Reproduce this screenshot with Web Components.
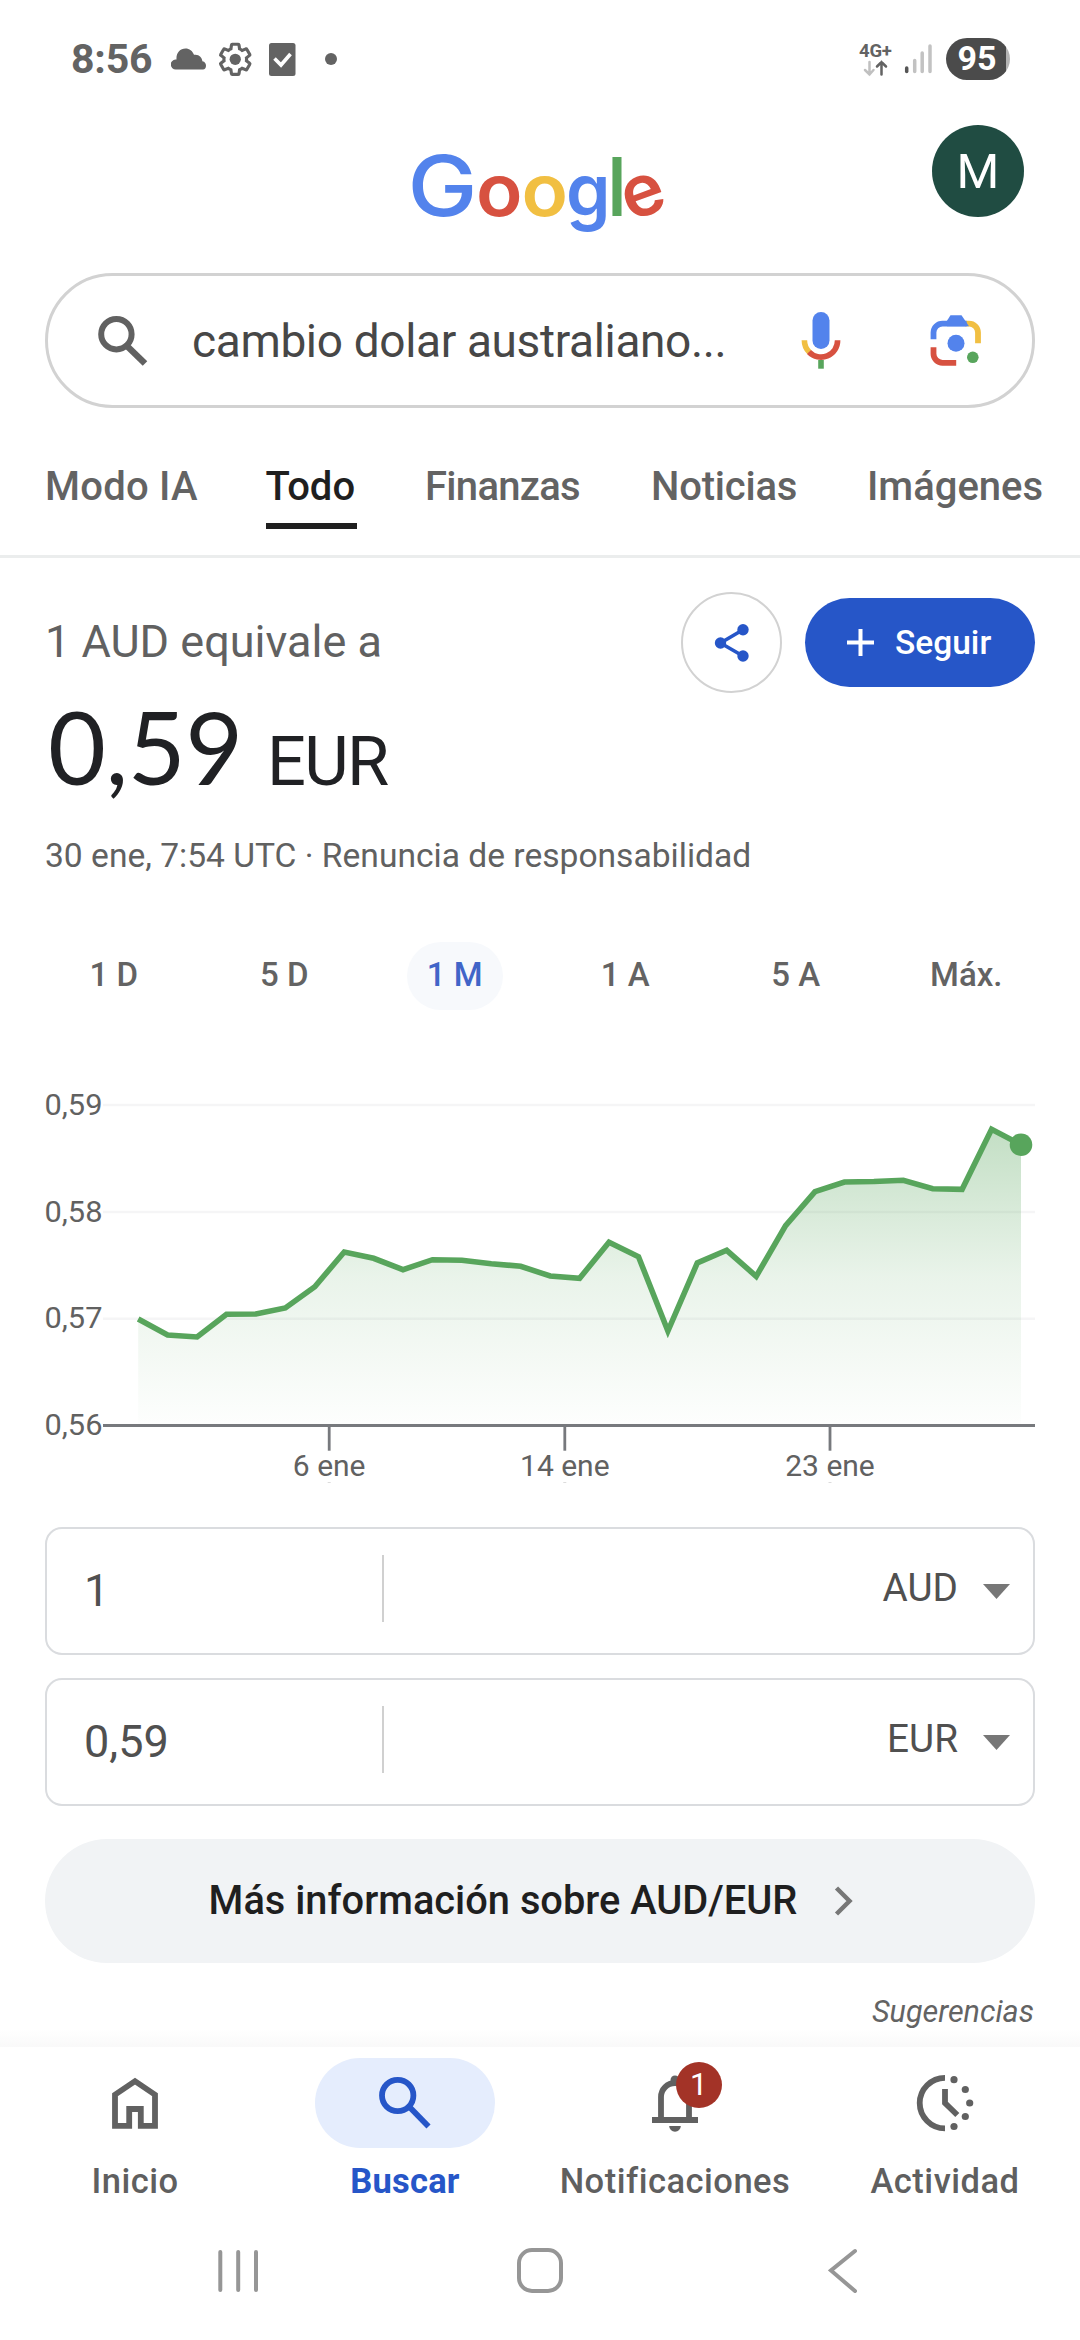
<!DOCTYPE html>
<html lang="es">
<head>
<meta charset="utf-8">
<title>cambio dolar australiano</title>
<style>
  body {
    margin: 0;
    width: 1080px;
    height: 2340px;
    overflow: hidden;
    background: #fff;
    color: #5f6062;
    font-family: Roboto, "Liberation Sans", sans-serif;
  }
</style>
</head>
<body>
<search-page></search-page>

<script>
/**
 * Base element: renders the markup returned by render() in an open shadow root.
 */
class UiElement extends HTMLElement {
  constructor() {
    super();
    this._shadowRoot = this.attachShadow({ mode: 'open' });
  }

  connectedCallback() {
    this._shadowRoot.innerHTML = `
    <style>
      :host { display: block; box-sizing: border-box; }
      * { box-sizing: border-box; }
      svg { display: block; flex: none; }
    </style>
    ${this.render()}`;
  }
}

// Clock, notification icons, signal and battery
class StatusBar extends UiElement {
  render() {
    return `
    <style>
      :host {
        display: flex;
        align-items: center;
        height: 118px;
        padding: 0 70px;
        color: #636363;
      }
      .time { width: 101px; padding-left: 1px; font-weight: 700; font-size: 41px; letter-spacing: -.2px; line-height: 118px; }
      .left { flex: 1; }
      .net { width: 35px; font-weight: 700; font-size: 18.5px; line-height: 18px; letter-spacing: -.2px; }
      .net svg { margin-left: 4px; }
      .battery {
        width: 64px;
        height: 42px;
        margin-left: 12px;
        border-radius: 21px;
        background: linear-gradient(90deg, #4b4b4b 60px, #b4b4b4 60px);
        color: #fff;
        font-weight: 700;
        font-size: 34px;
        line-height: 41px;
        text-align: center;
        padding-right: 2px;
      }
    </style>
    <div class="time">8:56</div>
    <svg class="left" width="400" height="40" viewBox="171 39 400 40" preserveAspectRatio="xMinYMid">
      <path fill="#636363" d="M176 69.500a5 5 0 0 1-.5-10c.3 0 .8 0 1-.1C176 53 180 48.500 185.500 48.500c4 0 7 2.400 8.500 6.300 5-.8 8 2.500 8.400 6.500 2.600.4 3.600 2.500 3.600 4.500 0 2.200-1.200 3.700-3 3.700z"/>
      <g transform="translate(216.400 40.500) scale(1.570)">
        <path fill="none" stroke="#636363" stroke-width="2" d="M19.140,12.940c0.040-0.300,0.060-0.610,0.060-0.940c0-0.320-0.020-0.640-0.070-0.940l2.030-1.580c0.180-0.140,0.230-0.410,0.120-0.610 l-1.920-3.320c-0.120-0.220-0.370-0.290-0.590-0.220l-2.390,0.960c-0.500-0.380-1.030-0.700-1.620-0.940L14.400,2.810c-0.040-0.240-0.240-0.410-0.480-0.410 h-3.840c-0.240,0-0.430,0.170-0.470,0.410L9.250,5.350C8.660,5.590,8.120,5.920,7.630,6.290L5.240,5.330c-0.220-0.080-0.470,0-0.590,0.220L2.740,8.870 C2.620,9.080,2.660,9.340,2.860,9.480l2.030,1.580C4.840,11.360,4.800,11.690,4.800,12s0.020,0.640,0.070,0.940l-2.030,1.580 c-0.180,0.140-0.230,0.410-0.120,0.610l1.920,3.320c0.120,0.220,0.370,0.290,0.590,0.220l2.390-0.960c0.500,0.380,1.030,0.700,1.620,0.940l0.360,2.540 c0.050,0.240,0.240,0.410,0.480,0.410h3.840c0.240,0,0.440-0.170,0.470-0.410l0.360-2.540c0.590-0.240,1.130-0.560,1.620-0.940l2.390,0.960 c0.220,0.080,0.470,0,0.590-0.220l1.920-3.320c0.120-0.220,0.070-0.470-0.120-0.610L19.140,12.940z"/>
        <circle cx="12" cy="12" r="3.600" fill="#636363"/>
      </g>
      <rect x="269" y="43" width="26.500" height="33" rx="2.500" fill="#636363"/>
      <path fill="none" stroke="#fff" stroke-width="3.600" d="M274.500 58.500l6.500 6.500 9.500-11"/>
      <circle cx="331" cy="59" r="6" fill="#636363"/>
    </svg>
    <div class="net">4G+
      <svg width="28" height="17" viewBox="0 0 28 17" fill="none" stroke-width="2.500" stroke-linecap="round">
        <path stroke="#c0c0c0" d="M6.500 2v12.500M2 10l4.500 4.500L10.500 10"/>
        <path stroke="#636363" d="M18.500 14.500V2M14 6.500L18.500 2l4.500 4.500"/>
      </svg>
    </div>
    <svg width="30" height="30" viewBox="904 44 30 30" style="margin-left: 10px" stroke-width="3.500" stroke-linecap="round">
      <path stroke="#555" d="M906.700 68v3.500"/>
      <path stroke="#c2c2c2" d="M914.700 60.500v11M922.200 53v18.500M930 46v25.500"/>
    </svg>
    <div class="battery">95</div>`;
  }
}

// Logo and account avatar
class AppHeader extends UiElement {
  render() {
    return `
    <style>
      :host {
        display: grid;
        grid-template-columns: 1fr 260px 1fr;
        height: 155px;
        padding: 0 56px 0 45px;
      }
      .logo { grid-column: 2; }
      .logo text { font-family: Inter, Roboto, sans-serif; font-weight: 600; }
      .avatar {
        justify-self: end;
        width: 92px;
        height: 92px;
        margin-top: 7px;
        border-radius: 50%;
        background: #204c42;
        color: #fff;
        font-size: 49px;
        line-height: 93px;
        text-align: center;
      }
    </style>
    <svg class="logo" width="260" height="155" viewBox="404.500 118 260 155" overflow="visible">
      <text y="215.500" font-size="72"><tspan x="407" font-size="84" font-weight="500" fill="#5383ec" textLength="70" lengthAdjust="spacingAndGlyphs">G</tspan><tspan x="475.500" fill="#d75140" textLength="46.500" lengthAdjust="spacingAndGlyphs">o</tspan><tspan x="521" fill="#f1bf42" textLength="46.500" lengthAdjust="spacingAndGlyphs">o</tspan><tspan x="565.500" fill="#5383ec" textLength="44.500" lengthAdjust="spacingAndGlyphs">g</tspan><tspan x="609" font-size="81" font-weight="800" fill="#58a55c" textLength="15" lengthAdjust="spacingAndGlyphs">l</tspan><tspan x="629.500" dy="6" rotate="-20" fill="#d75140">e</tspan></text>
    </svg>
    <div class="avatar">M</div>`;
  }
}

class SearchBox extends UiElement {
  render() {
    return `
    <style>
      :host {
        display: flex;
        align-items: center;
        height: 135px;
        margin: 0 45px;
        padding: 0 49px 0 50px;
        border: 3px solid #d2d2d2;
        border-radius: 68px;
        color: #474747;
      }
      .query { width: 538px; margin: 0 70px 0 44px; font-size: 46px; line-height: 130px; letter-spacing: -.35px; white-space: nowrap; }
    </style>
    <svg width="50" height="50" viewBox="98 315 50 50" fill="none" stroke="#616161" stroke-width="6">
      <circle cx="116.400" cy="333.200" r="15.200"/>
      <path stroke-width="6.500" d="M128 346l17 16.500"/>
    </svg>
    <div class="query"><slot></slot></div>
    <svg width="42" height="58" viewBox="800.500 312 42 58" fill="none" stroke-width="5.600">
      <rect x="813" y="312" width="17" height="37" rx="8.500" fill="#5383ec"/>
      <path stroke="#f1bf42" d="M804.900 340.300a16.600 16.600 0 0 0 5 12"/>
      <path stroke="#d75140" d="M809.500 352a16.600 16.600 0 0 0 28.600-11.700"/>
      <path stroke="#58a55c" d="M821.500 360v8.700"/>
    </svg>
    <svg width="52" height="54" viewBox="930.500 314 52 54" style="margin-left: 88px" fill="none" stroke-width="5.800">
      <path stroke="#f1bf42" d="M966 323.600h3.500a9 9 0 0 1 9 9V343.300"/>
      <path stroke="#5383ec" d="M934 339.300v-6.700a9 9 0 0 1 9-9h24"/>
      <path fill="#5383ec" d="M947 321.500l4-6.200h11l7.500 11h-22z"/>
      <path stroke="#d75140" d="M934 347.300v6.500a9 9 0 0 0 9 9h13.700"/>
      <circle cx="956.500" cy="343.300" r="8.500" fill="#5383ec"/>
      <circle cx="973.300" cy="357.300" r="5.800" fill="#58a55c"/>
    </svg>`;
  }
}

// Result type tabs, the one marked "selected" is underlined
class SearchTabs extends UiElement {
  render() {
    return `
    <style>
      :host {
        display: grid;
        grid-template-columns: 152.500px 91.500px 158px 148px 178px;
        column-gap: 68px;
        height: 150px;
        padding-left: 45px;
        border-bottom: 3px solid #ebeded;
      }
    </style>
    <slot></slot>`;
  }
}

class SearchTab extends UiElement {
  render() {
    return `
    <style>
      :host {
        height: 121px;
        padding-top: 51px;
        font-size: 40px;
        line-height: 56px;
        font-weight: 500;
        white-space: nowrap;
        color: #636363;
      }
      :host([selected]) { color: #1f1f1f; border-bottom: 6px solid #1f1f1f; }
    </style>
    <slot></slot>`;
  }
}

class RateSummary extends UiElement {
  render() {
    return `
    <style>
      :host { padding: 34px 45px 0; height: 350px; color: #616161; }
      .top { display: flex; align-items: center; height: 101px; }
      .label { flex: 1; font-size: 45px; line-height: 98px; padding-bottom: 2px; }
      .share {
        display: grid;
        place-items: center;
        width: 101px;
        height: 101px;
        margin-right: 23px;
        border: 2px solid #d2d2d2;
        border-radius: 50%;
      }
      .follow {
        display: flex;
        align-items: center;
        gap: 21px;
        width: 230px;
        height: 89px;
        padding-left: 42px;
        border-radius: 45px;
        background: #2656c8;
        color: #fff;
        font-weight: 500;
        font-size: 33.500px;
      }
      .value {
        display: flex;
        align-items: baseline;
        height: 108px;
        padding-left: 3px;
        font-family: Lato, sans-serif;
        font-size: 100px;
        line-height: 107px;
        color: #202124;
        white-space: nowrap;
      }
      .value span { width: 219px; letter-spacing: -.5px; }
      .value small { font-family: Roboto, sans-serif; font-size: 68.500px; letter-spacing: -1.700px; }
      .date { margin-top: 35px; font-size: 33.600px; line-height: 40px; }
    </style>
    <div class="top">
      <div class="label">1 AUD equivale a</div>
      <div class="share">
        <svg width="36" height="40" viewBox="713.500 622.500 36 40" fill="#2656c8">
          <path fill="none" stroke="#2656c8" stroke-width="3.600" d="M742.500 629.300L720 642.500l22.500 13"/>
          <circle cx="742.500" cy="629.300" r="5.700"/>
          <circle cx="720" cy="642.500" r="5.700"/>
          <circle cx="742.500" cy="655.500" r="5.700"/>
        </svg>
      </div>
      <div class="follow">
        <svg width="27" height="27" viewBox="0 0 27 27" stroke="#fff" stroke-width="4"><path d="M13.500 0v27M0 13.500h27"/></svg>
        Seguir
      </div>
    </div>
    <div class="value"><span>0,59</span><small>EUR</small></div>
    <div class="date">30 ene, 7:54 UTC · Renuncia de responsabilidad</div>`;
  }
}

class RangePicker extends UiElement {
  render() {
    return `
    <style>
      :host {
        display: grid;
        grid-template-columns: repeat(6, 170.500px);
        justify-items: center;
        justify-content: center;
        height: 172px;
        padding-top: 34px;
      }
      span {
        width: 96px;
        height: 68px;
        border-radius: 34px;
        font-weight: 500;
        font-size: 33px;
        line-height: 65px;
        text-align: center;
        color: #636363;
      }
      .on { background: #f7f9fc; color: #4165c8; }
    </style>
    <span>1 D</span><span>5 D</span><span class="on">1 M</span><span>1 A</span><span>5 A</span><span>Máx.</span>`;
  }
}

// Line chart of the exchange rate
class RateChart extends UiElement {
  render() {
    // one sample per day, as heights on the canvas
    const samples = [
      1319, 1335, 1337, 1314.3, 1314, 1308, 1286.7, 1252, 1258.3, 1269.7, 1259.7,
      1260.3, 1263.7, 1266.3, 1276, 1278.3, 1242.3, 1256.7, 1331, 1263, 1250.3,
      1276.3, 1225.7, 1191.7, 1182, 1181.5, 1180.3, 1188.7, 1189.3, 1129.3, 1144.7
    ];
    const x0 = 138.2;
    const step = (1021 - x0) / (samples.length - 1);
    const line = samples.map((y, i) => `${(x0 + i * step).toFixed(1)},${y}`).join(' ');
    const rows = [['0,59', 1105], ['0,58', 1212], ['0,57', 1318.7], ['0,56', 1425.5]];
    const ticks = [['6 ene', 329.2], ['14 ene', 564.8], ['23 ene', 830]];

    return `
    <style>
      :host { height: 427px; }
      text { font-size: 30px; fill: #616161; }
    </style>
    <svg width="1080" height="427" viewBox="0 1080 1080 427">
      <defs>
        <linearGradient id="fade" gradientUnits="userSpaceOnUse" x1="0" y1="1128" x2="0" y2="1425">
          <stop offset="0" stop-color="#58a55c" stop-opacity=".36"/>
          <stop offset=".5" stop-color="#58a55c" stop-opacity=".13"/>
          <stop offset="1" stop-color="#58a55c" stop-opacity=".01"/>
        </linearGradient>
      </defs>
      ${rows.map(([label, y], i) => `
        <text x="44.500" y="${y + 9.5}" textLength="58" lengthAdjust="spacingAndGlyphs">${label}</text>
        ${i < 3 ? `<path stroke="#f5f5f6" stroke-width="2.500" d="M103 ${y}H1035"/>` : ''}`).join('')}
      <polygon fill="url(#fade)" points="${x0},1425 ${line} 1021,1425"/>
      <path stroke="#77797d" stroke-width="2.800" d="M103 1425.500H1035"/>
      <polyline fill="none" stroke="#58a55c" stroke-width="5.600" stroke-miterlimit="10" points="${line}"/>
      <circle cx="1021" cy="1144.700" r="11.300" fill="#58a55c"/>
      ${ticks.map(([label, x]) => `
        <path stroke="#77797d" stroke-width="2.800" d="M${x} 1425V1450.700"/>
        <path stroke="#dcdcdc" stroke-width="1" d="M${x - 1.5} 1482.500h3"/>
        <text x="${x}" y="1475.700" text-anchor="middle">${label}</text>`).join('')}
    </svg>`;
  }
}

// One side of the converter: amount and currency
class AmountField extends UiElement {
  render() {
    return `
    <style>
      :host {
        display: flex;
        align-items: center;
        height: 128px;
        margin: 0 45px 23px;
        padding: 0 23px 0 37px;
        border: 2px solid #dadcdf;
        border-radius: 17px;
        color: #505050;
      }
      .amount { width: 298px; font-size: 45px; line-height: 124px; }
      .currency { flex: 1; text-align: right; border-left: 2px solid #d0d0d0; height: 67px; margin-top: -5px; padding-right: 25px; font-size: 38.700px; line-height: 66px; }
    </style>
    <div class="amount">${this.getAttribute('amount')}</div>
    <div class="currency">${this.getAttribute('currency')}</div>
    <svg width="27" height="15" viewBox="0 0 27 15"><path fill="#777" d="M0 0h27L13.500 15z"/></svg>`;
  }
}

class MoreLink extends UiElement {
  render() {
    return `
    <style>
      :host {
        display: flex;
        align-items: center;
        justify-content: center;
        gap: 37px;
        height: 124px;
        margin: 33px 45px 0;
        padding-right: 17px;
        border-radius: 62px;
        background: #f1f3f5;
        color: #1f1f1f;
        font-weight: 500;
        font-size: 39.800px;
      }
      span { padding-bottom: 2px; }
    </style>
    <span><slot></slot></span>
    <svg width="20" height="30" viewBox="0 0 20 30"><path fill="none" stroke="#777" stroke-width="4.500" d="M2.500 2l13 13-13 13"/></svg>`;
  }
}

class SuggestionNote extends UiElement {
  render() {
    return `
    <style>
      :host {
        height: 84px;
        padding: 29px 46px 0;
        font-size: 30.500px;
        line-height: 40px;
        font-style: italic;
        text-align: right;
        color: #636363;
        background: linear-gradient(#fff 66px, #f9f9f9);
      }
    </style>
    <slot></slot>`;
  }
}

class BottomNav extends UiElement {
  render() {
    return `
    <style>
      :host { display: grid; grid-template-columns: repeat(4, 270px); height: 183px; padding-top: 11px; background: #fff; }
    </style>
    <slot></slot>`;
  }
}

const navIcons = {
  home: '<path d="M3 50.800V19.700L23 6.200l20 13.500V50.800H28.800V34h-11.600v16.800z"/>',
  search: '<circle cx="15.700" cy="20.500" r="15.700"/><path d="M27 31.500l19.500 20"/>',
  bell: `<path d="M9 43V22a14 14 0 0 1 28 0V43M0 45h46"/>
    <circle cx="23" cy="5" r="4.500" fill="#616161" stroke="none"/>
    <path stroke="none" fill="#616161" d="M17.200 51h11.600a5.800 5.800 0 0 1-11.600 0z"/>`,
  activity: `<path d="M23 2.800a25.300 25.300 0 0 0 0 50.600M23 14v14l12.300 12"/>
    <g fill="#616161" stroke="none"><circle cx="32" cy="4.700" r="3.600"/><circle cx="43.300" cy="14.500" r="3.600"/>
    <circle cx="47.700" cy="28" r="3.600"/><circle cx="43.300" cy="41.500" r="3.600"/><circle cx="32" cy="51.500" r="3.600"/></g>`
};

class NavItem extends UiElement {
  render() {
    const icon = this.getAttribute('icon');
    const badge = this.getAttribute('badge');
    const selected = this.hasAttribute('selected');
    return `
    <style>
      :host {
        display: flex;
        flex-direction: column;
        align-items: center;
        color: #5f5f5f;
        font-weight: 500;
        font-size: 34.500px;
        letter-spacing: .5px;
      }
      :host([selected]) { color: #2656c8; font-weight: 700; letter-spacing: .2px; }
      .pill { position: relative; display: grid; place-items: center; width: 180px; height: 90px; border-radius: 45px; }
      :host([selected]) .pill { background: #e5edfd; }
      .badge {
        position: absolute;
        left: 91px;
        top: 4px;
        width: 46px;
        height: 46px;
        border-radius: 50%;
        background: #a33327;
        color: #fff;
        font-size: 31px;
        line-height: 46px;
        text-align: center;
        font-weight: 400;
      }
      .label { line-height: 66px; }
    </style>
    <div class="pill">
      <svg width="46" height="56" viewBox="0 0 46 56" overflow="visible" fill="none" stroke="${selected ? '#2656c8' : '#616161'}" stroke-width="5.800">${navIcons[icon]}</svg>
      ${badge ? `<div class="badge">${badge}</div>` : ''}
    </div>
    <div class="label"><slot></slot></div>`;
  }
}

// Recents, home and back of the system
class SystemNav extends UiElement {
  render() {
    return `
    <style>
      :host { display: flex; justify-content: space-between; padding: 17px 222px 0 216px; height: 110px; background: #fff; }
      .home { margin-right: 8px; }
    </style>
    <svg width="44" height="46" viewBox="0 0 44 46" stroke="#969696" stroke-width="4" stroke-linecap="round"><path d="M4.300 5v38M22.200 5v38M40 5v38"/></svg>
    <svg class="home" width="46" height="46" viewBox="0 0 46 46" fill="none" stroke="#969696" stroke-width="4"><rect x="2" y="3" width="42" height="41" rx="13"/></svg>
    <svg width="30" height="46" viewBox="0 0 30 46" fill="none" stroke="#969696" stroke-width="4" stroke-linecap="round"><path d="M27 4L3 23.500 27 44"/></svg>`;
  }
}

class SearchPage extends UiElement {
  render() {
    return `
    <status-bar></status-bar>
    <app-header></app-header>
    <search-box>cambio dolar australiano...</search-box>
    <search-tabs>
      <search-tab style="letter-spacing: .25px">Modo IA</search-tab>
      <search-tab selected>Todo</search-tab>
      <search-tab style="letter-spacing: -.7px">Finanzas</search-tab>
      <search-tab style="letter-spacing: -.2px">Noticias</search-tab>
      <search-tab>Imágenes</search-tab>
    </search-tabs>
    <rate-summary></rate-summary>
    <range-picker></range-picker>
    <rate-chart></rate-chart>
    <div style="height: 20px"></div>
    <amount-field amount="1" currency="AUD"></amount-field>
    <amount-field amount="0,59" currency="EUR"></amount-field>
    <more-link>Más información sobre AUD/EUR</more-link>
    <suggestion-note>Sugerencias</suggestion-note>
    <bottom-nav>
      <nav-item icon="home">Inicio</nav-item>
      <nav-item icon="search" selected>Buscar</nav-item>
      <nav-item icon="bell" badge="1">Notificaciones</nav-item>
      <nav-item icon="activity">Actividad</nav-item>
    </bottom-nav>
    <system-nav></system-nav>`;
  }
}

customElements.define('status-bar', StatusBar);
customElements.define('app-header', AppHeader);
customElements.define('search-box', SearchBox);
customElements.define('search-tabs', SearchTabs);
customElements.define('search-tab', SearchTab);
customElements.define('rate-summary', RateSummary);
customElements.define('range-picker', RangePicker);
customElements.define('rate-chart', RateChart);
customElements.define('amount-field', AmountField);
customElements.define('more-link', MoreLink);
customElements.define('suggestion-note', SuggestionNote);
customElements.define('bottom-nav', BottomNav);
customElements.define('nav-item', NavItem);
customElements.define('system-nav', SystemNav);
customElements.define('search-page', SearchPage);
</script>
</body>
</html>
